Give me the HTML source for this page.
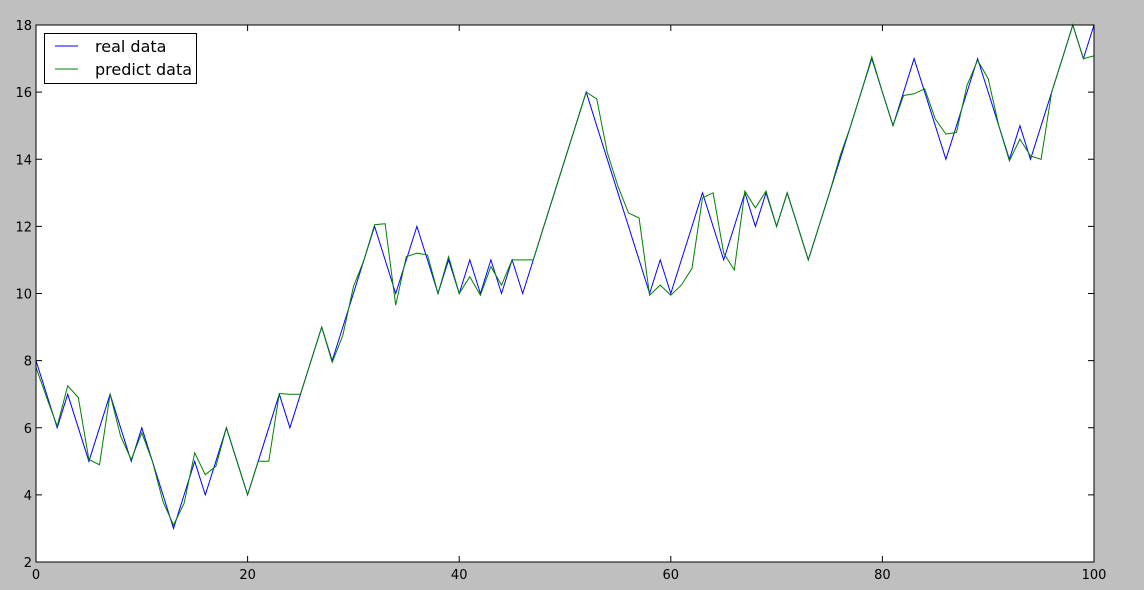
<!DOCTYPE html>
<html><head><meta charset="utf-8"><style>
html,body{margin:0;padding:0;background:#bfbfbf;width:1144px;height:590px;overflow:hidden}
svg{display:block;font-family:"DejaVu Sans","Liberation Sans",sans-serif}
</style></head><body>
<svg id="s" width="1144" height="590" xmlns="http://www.w3.org/2000/svg">
<rect x="0" y="0" width="1144" height="590" fill="#bfbfbf"/>
<rect x="36" y="25" width="1058" height="537" fill="#fff"/>
<g id="g"></g>
<rect x="36" y="25" width="1058" height="537" fill="none" stroke="#000" stroke-width="1"/>
<rect x="44.5" y="33.5" width="152" height="50" fill="#fff" stroke="#000" stroke-width="1"/>
<line x1="55" y1="46" x2="78" y2="46" stroke="#0000ff" stroke-width="1"/>
<line x1="55" y1="69" x2="78" y2="69" stroke="#008000" stroke-width="1"/>
<text x="95" y="52" font-size="16">real data</text>
<text x="95" y="75" font-size="16">predict data</text>
</svg>
<script>
var r=[8,7,6,7,6,5,6,7,6,5,6,5,4,3,4,5,4,5,6,5,4,5,6,7,6,7,8,9,8,9,10,11,12,11,10,11,12,11,10,11,10,11,10,11,10,11,10,11,12,13,14,15,16,15,14,13,12,11,10,11,10,11,12,13,12,11,12,13,12,13,12,13,12,11,12,13,14,15,16,17,16,15,16,17,16,15,14,15,16,17,16,15,14,15,14,15,16,17,18,17,18];
var p=[7.8,6.9,6.05,7.25,6.9,5.05,4.9,7.0,5.75,5.05,5.85,5.0,3.8,3.1,3.75,5.25,4.6,4.85,6.0,5.0,4.0,5.0,5.0,7.02,7.0,7.0,8.0,9.0,7.95,8.75,10.2,11.0,12.05,12.08,9.65,11.1,11.2,11.15,10.0,11.1,10.0,10.5,9.95,10.8,10.25,11.0,11.0,11.0,12,13,14,15,16,15.8,14.2,13.2,12.4,12.25,9.95,10.25,9.95,10.25,10.75,12.85,13.0,11.2,10.7,13.05,12.55,13.05,12.0,13.0,12.0,11.0,12,13,14.1,15,16,17.05,16.0,15.0,15.9,15.95,16.1,15.2,14.75,14.8,16.2,16.95,16.4,15.0,13.95,14.6,14.1,14.0,16.0,17.0,18.0,17.0,17.08];
function X(i){return 36+10.58*i}function Y(v){return 562-33.5625*(v-2)}
function pl(a,c){return '<polyline fill="none" stroke="'+c+'" stroke-width="1" points="'+a.map(function(v,i){return X(i).toFixed(1)+','+Y(v).toFixed(1)}).join(' ')+'"/>'}
var h=pl(r,'#0000ff')+pl(p,'#008000');
for(var i=0;i<=100;i+=20){var x=X(i);h+='<line x1="'+x+'" y1="562" x2="'+x+'" y2="556" stroke="#000"/><line x1="'+x+'" y1="25" x2="'+x+'" y2="31" stroke="#000"/><text x="'+x+'" y="579" font-size="13" text-anchor="middle">'+i+'</text>';}
for(var v=2;v<=18;v+=2){var y=Y(v);h+='<line x1="36" y1="'+y+'" x2="42" y2="'+y+'" stroke="#000"/><line x1="1094" y1="'+y+'" x2="1088" y2="'+y+'" stroke="#000"/><text x="32" y="'+(y+5)+'" font-size="13" text-anchor="end">'+v+'</text>';}
document.getElementById('g').innerHTML=h;
</script>
</body></html>
